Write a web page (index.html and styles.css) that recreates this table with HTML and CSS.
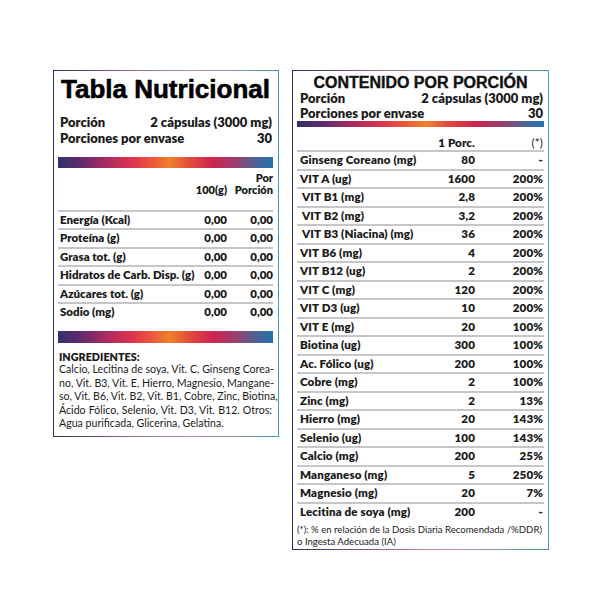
FILE: index.html
```html
<!DOCTYPE html>
<html lang="es">
<head>
<meta charset="utf-8">
<title>Tabla Nutricional</title>
<link rel="stylesheet" href="styles.css">
</head>
<body>
<div class="page">
  <section class="panel left">
    <h1 class="title">Tabla Nutricional</h1>
    <div class="info first"><span>Porción</span><span>2 cápsulas (3000 mg)</span></div>
    <div class="info"><span>Porciones por envase</span><span>30</span></div>
    <div class="bar bar-top"></div>
    <div class="lhead"><span></span><span>100(g)</span><span>Por<br>Porción</span></div>
    <div class="lrow"><span>Energía (Kcal)</span><span>0,00</span><span>0,00</span></div>
    <div class="lrow"><span>Proteína (g)</span><span>0,00</span><span>0,00</span></div>
    <div class="lrow"><span>Grasa tot. (g)</span><span>0,00</span><span>0,00</span></div>
    <div class="lrow"><span>Hidratos de Carb. Disp. (g)</span><span>0,00</span><span>0,00</span></div>
    <div class="lrow"><span>Azúcares tot. (g)</span><span>0,00</span><span>0,00</span></div>
    <div class="lrow last"><span>Sodio (mg)</span><span>0,00</span><span>0,00</span></div>
    <div class="bar bar-bottom"></div>
    <div class="ingr-title">INGREDIENTES:</div>
    <div class="ingr">
      <div class="jl">Calcio, Lecitina de soya, Vit. C, Ginseng Corea-</div>
      <div class="jl">no, Vit. B3, Vit. E, Hierro, Magnesio, Mangane-</div>
      <div class="jl">so, Vit. B6, Vit. B2, Vit. B1, Cobre, Zinc, Biotina,</div>
      <div class="jl">Ácido Fólico, Selenio, Vit. D3, Vit. B12. Otros:</div>
      <div class="nl">Agua purificada, Glicerina, Gelatina.</div>
    </div>
  </section>

  <section class="panel right">
    <h2 class="rtitle">CONTENIDO POR PORCIÓN</h2>
    <div class="rinfo"><span>Porción</span><span>2 cápsulas (3000 mg)</span></div>
    <div class="rinfo"><span>Porciones por envase</span><span>30</span></div>
    <div class="bar rbar"></div>
    <div class="rhead"><span></span><span>1 Porc.</span><span class="star">(*)</span></div>
    <div class="rrow"><span>Ginseng Coreano (mg)</span><span>80</span><span>-</span></div>
    <div class="rrow"><span>VIT A (ug)</span><span>1600</span><span>200%</span></div>
    <div class="rrow"><span class="ind">VIT B1 (mg)</span><span>2,8</span><span>200%</span></div>
    <div class="rrow"><span class="ind">VIT B2 (mg)</span><span>3,2</span><span>200%</span></div>
    <div class="rrow"><span class="ind">VIT B3 (Niacina) (mg)</span><span>36</span><span>200%</span></div>
    <div class="rrow"><span>VIT B6 (mg)</span><span>4</span><span>200%</span></div>
    <div class="rrow"><span>VIT B12 (ug)</span><span>2</span><span>200%</span></div>
    <div class="rrow"><span>VIT C (mg)</span><span>120</span><span>200%</span></div>
    <div class="rrow"><span>VIT D3 (ug)</span><span>10</span><span>200%</span></div>
    <div class="rrow"><span>VIT E (mg)</span><span>20</span><span>100%</span></div>
    <div class="rrow"><span>Biotina (ug)</span><span>300</span><span>100%</span></div>
    <div class="rrow"><span>Ac. Fólico (ug)</span><span>200</span><span>100%</span></div>
    <div class="rrow"><span>Cobre (mg)</span><span>2</span><span>100%</span></div>
    <div class="rrow"><span>Zinc (mg)</span><span>2</span><span>13%</span></div>
    <div class="rrow"><span>Hierro (mg)</span><span>20</span><span>143%</span></div>
    <div class="rrow"><span>Selenio (ug)</span><span>100</span><span>143%</span></div>
    <div class="rrow"><span>Calcio (mg)</span><span>200</span><span>25%</span></div>
    <div class="rrow"><span>Manganeso (mg)</span><span>5</span><span>250%</span></div>
    <div class="rrow"><span>Magnesio (mg)</span><span>20</span><span>7%</span></div>
    <div class="rrow last"><span>Lecitina de soya (mg)</span><span>200</span><span>-</span></div>
    <div class="foot">(*): % en relación de la Dosis Diaria Recomendada /%DDR)<br>o Ingesta Adecuada (IA)</div>
  </section>
</div>
</body>
</html>
```

FILE: styles.css
```css
body {
  margin: 0;
  background: #fff;
  color: #1b1b1b;
  font-family: Lato, "Open Sans", sans-serif;
}

.page {
  display: flex;
  align-items: flex-start;
  gap: 13px;
  padding: 70px 0 0 53px;
}

.panel {
  box-sizing: border-box;
  border: 1px solid #777;
  border-image: linear-gradient(90deg, #2e2d5e, #b87594 45%, #c98aa6 60%, #3d9cc0) 1;
}

.bar {
  background: linear-gradient(90deg, #35306b 0%, #5c2c6e 10%, #a82a62 22%, #e0344e 35%, #ee5c3a 45%, #f0812b 52%, #e2463e 62%, #cc2550 72%, #a13b6e 82%, #5e5a8e 90%, #1f74ad 100%);
}

/* LEFT PANEL */
.left {
  width: 226px;
  padding: 0 5px 5px 4px;
}

.title {
  margin: 3px 0 0;
  font: bold 26px/30px "Liberation Sans", Arial, sans-serif;
  -webkit-text-stroke: 0.6px #000;
  color: #000;
  text-align: center;
}

.info {
  display: flex;
  justify-content: space-between;
  font-weight: 800;
  font-size: 13px;
  line-height: 16px;
  padding: 0 1px 0 2px;
}

.info.first {
  margin-top: 10px;
}

.bar-top {
  height: 11px;
  margin-top: 11px;
}

.lhead,
.lrow {
  display: grid;
  grid-template-columns: minmax(0, 1fr) 36px 46px;
  font-weight: 800;
  font-size: 11.5px;
  white-space: nowrap;
  padding: 0 0 0 2px;
}

.lhead span,
.lrow span:not(:first-child) {
  text-align: right;
}

.lhead {
  padding-top: 4px;
  padding-bottom: 14px;
  font-size: 11px;
  line-height: 12px;
  align-items: end;
  border-bottom: 2px solid #c6c6c6;
}

.lrow {
  box-sizing: border-box;
  height: 18.4px;
  line-height: 16.4px;
  border-bottom: 2px solid #c6c6c6;
}

.lrow.last {
  border-bottom: 0;
}

.bar-bottom {
  height: 12px;
  margin-top: 8.6px;
}

.ingr-title {
  margin-top: 7px;
  font-weight: 800;
  font-size: 10.8px;
  line-height: 13.5px;
  padding-left: 1px;
}

.ingr {
  font-size: 10.6px;
  line-height: 13.5px;
  padding: 0 1px 0 1px;
}

.jl {
  white-space: nowrap;
  text-align: justify;
  text-align-last: justify;
}

.nl {
  white-space: nowrap;
}

/* RIGHT PANEL */
.right {
  width: 257px;
  padding: 0 4px 1px 4px;
}

.rtitle {
  margin: 3px 0 0;
  font: bold 16px/18px "Liberation Sans", Arial, sans-serif;
  -webkit-text-stroke: 0.4px #111;
  color: #111;
  text-align: center;
}

.rinfo {
  display: flex;
  justify-content: space-between;
  font-weight: 800;
  font-size: 13px;
  line-height: 15px;
  padding: 0 1px 0 3px;
}

.rinfo:first-of-type {
  margin-top: -1px;
}

.rbar {
  height: 6px;
}

.rhead,
.rrow {
  display: grid;
  grid-template-columns: minmax(0, 1fr) 56px 68px;
  font-size: 11.6px;
  font-weight: 800;
  letter-spacing: 0.1px;
  white-space: nowrap;
  padding: 0 1px 0 3px;
}

.rhead span,
.rrow span:not(:first-child) {
  text-align: right;
}

.rhead {
  padding-top: 9px;
  line-height: 14px;
  border-bottom: 2px solid #c6c6c6;
}

.rhead .star {
  font-weight: 400;
}

.rrow {
  box-sizing: border-box;
  height: 18.5px;
  line-height: 16.5px;
  border-bottom: 2px solid #c6c6c6;
}

.rrow.last {
  border-bottom: 0;
}

.ind {
  padding-left: 2px;
}

.foot {
  margin-top: 2px;
  font-size: 9.6px;
  line-height: 12px;
  white-space: nowrap;
}
```
